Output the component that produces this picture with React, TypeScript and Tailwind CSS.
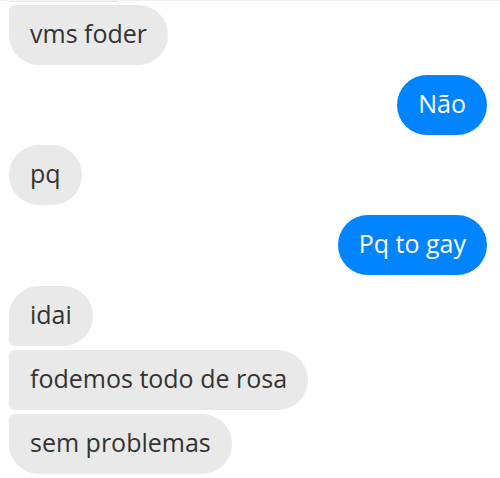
const messages = [
  { text: "vms foder", mine: false, shape: "rounded-[30px] rounded-tl-[6px]", mt: "mt-[3px]" },
  { text: "Não", mine: true, shape: "rounded-[30px]", mt: "mt-[10px]" },
  { text: "pq", mine: false, shape: "rounded-[30px]", mt: "mt-[10px]" },
  { text: "Pq to gay", mine: true, shape: "rounded-[30px]", mt: "mt-[10px]" },
  { text: "idai", mine: false, shape: "rounded-[30px] rounded-bl-[6px]", mt: "mt-[11px]" },
  { text: "fodemos todo de rosa", mine: false, shape: "rounded-[30px] rounded-l-[6px]", mt: "mt-[4px]" },
  { text: "sem problemas", mine: false, shape: "rounded-[30px] rounded-tl-[6px]", mt: "mt-[4px]" },
];

export default function App() {
  return (
    <div
      className="w-[500px] h-[478px] overflow-hidden bg-white border-t border-[#f2f2f2]"
      style={{ fontFamily: '"Open Sans", "Noto Sans", sans-serif' }}
    >
      <div className="flex flex-col pl-[9px] pr-[13px]">
        {/* tail of the previous bubble, cut off by the top edge */}
        <div className="ml-px h-px w-[108px] rounded-b-[6px] bg-[#e6e6e6]" />
        {messages.map((m, i) => (
          <div
            key={i}
            className={`${m.mt} flex h-[60px] items-center px-[21px] text-[25px] ${m.shape} ${
              m.mine ? "self-end bg-[#0084ff] text-white" : "self-start bg-[#e9e9e9] text-[#333333]"
            }`}
          >
            <span className="-mt-[2px]">{m.text}</span>
          </div>
        ))}
      </div>
    </div>
  );
}
